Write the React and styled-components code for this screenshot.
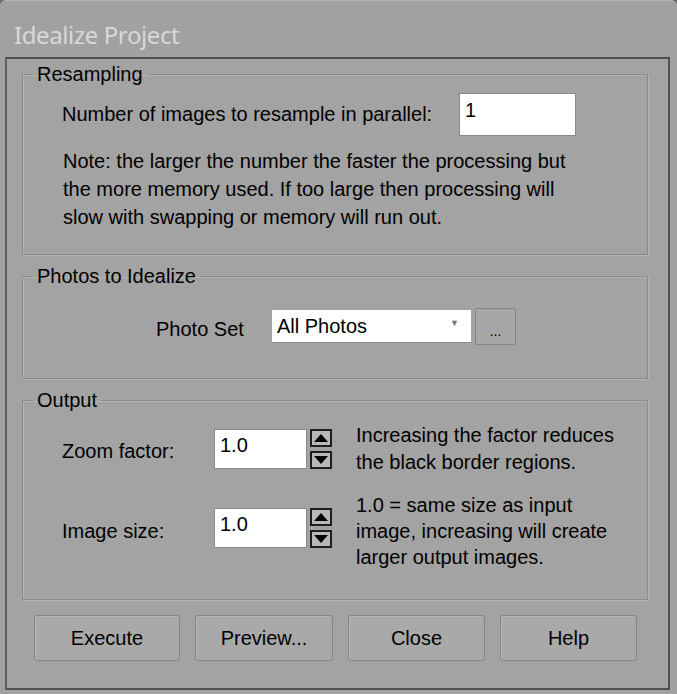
import React from "react";
import styled, { createGlobalStyle } from "styled-components";

const Global = createGlobalStyle`
  html, body {
    margin: 0;
    padding: 0;
    background: #6a6a6a;
  }
  * { box-sizing: border-box; }
`;

const Window = styled.div`
  width: 677px;
  height: 694px;
  background: #a1a1a1;
  border-top: 1px solid #b4b4b4;
  border-radius: 6px 6px 0 0;
  font-family: "Liberation Sans", Arial, sans-serif;
  font-size: 20px;
  color: #000;
  display: flex;
  flex-direction: column;
  overflow: hidden;
`;

const TitleBar = styled.div`
  height: 56px;
  display: flex;
  align-items: center;
  padding: 10px 0 0 14px;
  font-family: "Noto Sans", "Open Sans", sans-serif;
  font-size: 24px;
  color: #d8d8d8;
  letter-spacing: -0.4px;
`;

const Panel = styled.div`
  margin: 0 7px 0 5px;
  height: 633px;
  border-top: 2px solid #4f4f4f;
  border-left: 2px solid #5e5e5e;
  border-right: 2px solid #4f4f4f;
  border-bottom: 2px solid #4f4f4f;
  background: #a3a3a3;
  padding: 5px 20px 0 15px;
  display: flex;
  flex-direction: column;
`;

const Group = styled.fieldset`
  margin: ${(p) => p.$mt || 0}px 0 0 0;
  padding: ${(p) => p.$pad};
  border: 1px solid #8b8b8b;
  box-shadow: inset 1px 1px 0 #b3b3b3, 1px 1px 0 #b3b3b3;
  border-radius: 0;
  min-width: 0;
`;

const Legend = styled.legend`
  margin-left: 10px;
  padding: 0 4px;
  line-height: 21px;
  font-size: 20px;
`;

const Row = styled.div`
  display: flex;
  align-items: center;
  margin-left: ${(p) => p.$ml || 0}px;
`;

const Label = styled.span`
  width: ${(p) => p.$w}px;
  flex: none;
`;

const TextBox = styled.div`
  width: ${(p) => p.$w}px;
  height: ${(p) => p.$h}px;
  background: #fff;
  border: 1px solid #8a8a8a;
  padding: ${(p) => p.$pt || 4}px 0 0 5px;
  line-height: 20px;
  flex: none;
`;

const Note = styled.p`
  margin: 11px 0 0 40px;
  line-height: 28px;
`;

const Select = styled.div`
  width: 199px;
  height: 33px;
  background: #fff;
  border-bottom: 1px solid #8c8c8c;
  display: flex;
  align-items: center;
  justify-content: space-between;
  padding: 0 12px 0 5px;
`;

const Caret = styled.span`
  font-size: 9px;
  color: #777;
  margin-top: -6px;
`;

const SmallButton = styled.div`
  width: 41px;
  height: 37px;
  margin-left: 4px;
  border: 1px solid #838383;
  border-radius: 2px;
  background: #a6a6a6;
  display: flex;
  align-items: center;
  justify-content: center;
  padding-top: 8px;
  font-size: 14px;
  align-self: flex-start;
`;

const SpinWrap = styled.div`
  display: flex;
  flex: none;
  margin-bottom: ${(p) => p.$mb || 0}px;
`;

const Spin = styled.div`
  display: flex;
  flex-direction: column;
  gap: 4px;
  margin-left: 3px;
  flex: none;
`;

const SpinButton = styled.div`
  width: 22px;
  height: 18px;
  border: 2px solid #1e1e1e;
  background: #b8b8b8;
  display: flex;
  align-items: center;
  justify-content: center;
`;

const Desc = styled.p`
  margin: 0 0 0 24px;
  line-height: ${(p) => p.$lh}px;
`;

const Buttons = styled.div`
  display: flex;
  gap: 15px;
  margin: 15px 0 0 12px;
`;

const Button = styled.div`
  width: ${(p) => p.$w}px;
  height: 46px;
  background: #a9a9a9;
  border: 1px solid #858585;
  border-radius: 3px;
  box-shadow: inset 1px 1px 0 #b6b6b6;
  display: flex;
  align-items: center;
  justify-content: center;
`;

const Arrow = ({ down }) => (
  <svg width="14" height="8" viewBox="0 0 14 8">
    <polygon points={down ? "0,0 14,0 7,8" : "7,0 14,8 0,8"} fill="#000" />
  </svg>
);

const Spinner = ({ value, mb }) => (
  <SpinWrap $mb={mb}>
    <TextBox $w={93} $h={40} $pt={5}>{value}</TextBox>
    <Spin>
      <SpinButton><Arrow /></SpinButton>
      <SpinButton><Arrow down /></SpinButton>
    </Spin>
  </SpinWrap>
);

export default function App() {
  return (
    <>
      <Global />
      <Window>
        <TitleBar>Idealize Project</TitleBar>
        <Panel>
          <Group $pad="8px 0 23px 0">
            <Legend>Resampling</Legend>
            <Row $ml={39}>
              <Label $w={397}>Number of images to resample in parallel:</Label>
              <TextBox $w={117} $h={43} $pt={6}>1</TextBox>
            </Row>
            <Note>
              Note: the larger the number the faster the processing but
              <br />
              the more memory used. If too large then processing will
              <br />
              slow with swapping or memory will run out.
            </Note>
          </Group>

          <Group $mt={11} $pad="21px 0 33px 0">
            <Legend>Photos to Idealize</Legend>
            <Row $ml={133}>
              <Label $w={116} style={{ paddingTop: 6 }}>Photo Set</Label>
              <Select>
                All Photos
                <Caret>▼</Caret>
              </Select>
              <SmallButton>...</SmallButton>
            </Row>
          </Group>

          <Group $mt={11} $pad="11px 0 29px 0">
            <Legend>Output</Legend>
            <Row $ml={39}>
              <Label $w={152} style={{ paddingTop: 4 }}>Zoom factor:</Label>
              <Spinner value="1.0" />
              <Desc $lh={27}>
                Increasing the factor reduces
                <br />
                the black border regions.
              </Desc>
            </Row>
            <Row $ml={39} style={{ marginTop: 16 }}>
              <Label $w={152}>Image size:</Label>
              <Spinner value="1.0" mb={6} />
              <Desc $lh={26}>
                1.0 = same size as input
                <br />
                image, increasing will create
                <br />
                larger output images.
              </Desc>
            </Row>
          </Group>

          <Buttons>
            <Button $w={146}>Execute</Button>
            <Button $w={138}>Preview...</Button>
            <Button $w={137}>Close</Button>
            <Button $w={137}>Help</Button>
          </Buttons>
        </Panel>
      </Window>
    </>
  );
}
